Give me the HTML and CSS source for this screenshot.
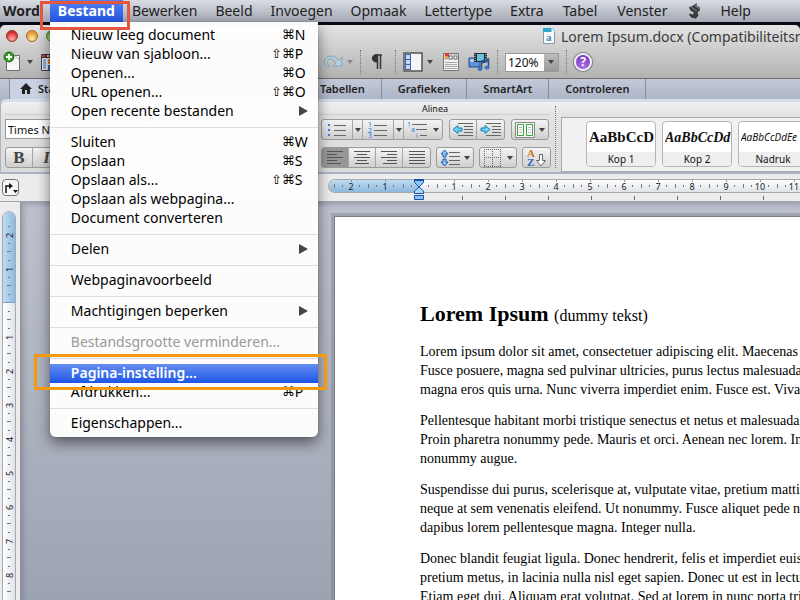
FILE: index.html
```html
<!DOCTYPE html>
<html lang="nl">
	<head>
		<meta charset="utf-8">
		<title>Lorem Ipsum.docx</title>
		<link rel="stylesheet" href="styles.css">
	</head>
	<body>

		<!-- menubalk -->
		<nav class="menubar">
			<button class="menu app">Word</button>
			<div class="menu-open">
				<button class="menu active">Bestand</button>
				<span class="mark mark-red"></span>

				<ul class="dropdown">
					<li><button class="item">Nieuw leeg document<kbd>⌘<b>N</b></kbd></button></li>
					<li><button class="item">Nieuw van sjabloon...<kbd>⇧⌘<b>P</b></kbd></button></li>
					<li><button class="item">Openen...<kbd>⌘<b>O</b></kbd></button></li>
					<li><button class="item">URL openen...<kbd>⇧⌘<b>O</b></kbd></button></li>
					<li><button class="item">Open recente bestanden<i class="sub"></i></button></li>
					<li class="line"></li>
					<li><button class="item">Sluiten<kbd>⌘<b>W</b></kbd></button></li>
					<li><button class="item">Opslaan<kbd>⌘<b>S</b></kbd></button></li>
					<li><button class="item">Opslaan als...<kbd>⇧⌘<b>S</b></kbd></button></li>
					<li><button class="item">Opslaan als webpagina...</button></li>
					<li><button class="item">Document converteren</button></li>
					<li class="line"></li>
					<li><button class="item">Delen<i class="sub"></i></button></li>
					<li class="line"></li>
					<li><button class="item">Webpaginavoorbeeld</button></li>
					<li class="line"></li>
					<li><button class="item">Machtigingen beperken<i class="sub"></i></button></li>
					<li class="line"></li>
					<li><button class="item" disabled>Bestandsgrootte verminderen...</button></li>
					<li class="line"></li>
					<li class="selected">
						<button class="item">Pagina-instelling...</button>
						<span class="mark mark-orange"></span>
					</li>
					<li><button class="item">Afdrukken...<kbd>⌘<b>P</b></kbd></button></li>
					<li class="line"></li>
					<li><button class="item">Eigenschappen...</button></li>
				</ul>
			</div>
			<button class="menu">Bewerken</button>
			<button class="menu">Beeld</button>
			<button class="menu">Invoegen</button>
			<button class="menu">Opmaak</button>
			<button class="menu">Lettertype</button>
			<button class="menu">Extra</button>
			<button class="menu wider">Tabel</button>
			<button class="menu wider">Venster</button>
			<button class="menu wider" aria-label="Script">
				<svg width="14" height="16" viewBox="0 0 14 16"><path d="M10 0L4.500 3.500 2 4l1 3 2 1.500 2 1-1 2-3-1-1 1.500L5 15l4 .5 2.500-3-1-3L13 7l-.5-3-3-1z" fill="#3a3a3c"/><path d="M4 4l6 4M7.500 2.500l4.500 3" stroke="#85888f"/></svg>
			</button>
			<button class="menu">Help</button>
		</nav>

		<div class="window">

			<div class="titlebar">
				<div class="lights">
					<button class="light red" aria-label="Sluit"></button>
					<button class="light yellow" aria-label="Minimaliseer"></button>
					<button class="light green" aria-label="Zoom"></button>
				</div>
				<div class="doc-title">
					<svg width="14" height="16" viewBox="0 0 14 16"><path d="M1.500.5h8l3 3v12h-11z" fill="#f6fafd" stroke="#8a98a6"/><path d="M1 0h9l3 3v1H1z" fill="#2fa5c9"/><path d="M9.500 0v4H13z" fill="#fff"/><text x="4" y="13" font-family="Liberation Serif, serif" font-size="11" font-weight="bold" fill="#3b8fbd">a</text></svg>
					<span>Lorem Ipsum.docx (Compatibiliteitsmodus)</span>
				</div>
			</div>

			<!-- werkbalk -->
			<div class="toolbar">
				<div class="tools-left">
					<button class="tool" aria-label="Nieuw">
						<svg width="20" height="22" viewBox="0 0 20 22"><path d="M3.500 4.500h13v15h-13z" fill="#f8f8f8" stroke="#6d6d6d"/><path d="M12 4.500l4.500 4.500" stroke="#aaa"/><circle cx="6" cy="6" r="5" fill="#3a9a2c" stroke="#1f6d18"/><path d="M6 3v6M3 6h6" stroke="#fff" stroke-width="2"/></svg>
					</button>
					<i class="down"></i>
					<button class="tool gallery" aria-label="Sjablonen">
						<svg width="20" height="20" viewBox="0 0 20 20"><path d="M.5 2.500h19v16H.5z" fill="#dfe7f2" stroke="#444"/><path d="M1 2h19v4H1z" fill="#333"/><path d="M1 3h3v2H1z" fill="#e0402c"/><path d="M6 3h2v2H6zM10 3h2v2h-2z" fill="#ccc"/><path d="M2 8h3M2 10h3M2 12h3M2 14h3M2 16h3" stroke="#4478b8"/><path d="M7 7h6v5H7z" fill="#e2762b"/><path d="M7 13h6v5H7z" fill="#3b62a8"/><path d="M14 7h5v11h-5z" fill="#543e38"/></svg>
					</button>
				</div>
				<button class="tool redo" aria-label="Opnieuw">
					<svg width="20" height="18" viewBox="0 0 20 18"><path d="M5 14.500C-1 11 .5 3 8 3c4 0 6 2 7.500 4.500L19 4v9h-9l3-3c-1.500-3-3-4-5-4-4 0-5 4-2 6.500z" fill="#b5cedb" stroke="#86a4b4"/></svg>
				</button>
				<i class="down pale"></i>
				<i class="dots"></i>
				<button class="tool pilcrow" aria-label="Alineatekens">
					<svg width="12" height="16" viewBox="0 0 12 16"><path d="M5 1h6M6.500 1v14M9.500 1v14" stroke="#333" stroke-width="1.500"/><path d="M6.500 0C-1 0-1 8.500 6.500 8.500z" fill="#333"/></svg>
				</button>
				<i class="dots"></i>
				<button class="tool" aria-label="Zijbalk">
					<svg width="20" height="20" viewBox="0 0 20 20"><path d="M1 1h18v18H1z" fill="#f4f5f8" stroke="#555" stroke-width="1.500"/><path d="M2 2h6v16H2z" fill="#3f62a8"/><path d="M3 3h4v4H3zM3 8h4v4H3zM3 13h4v4H3z" fill="#c5d6f0"/></svg>
				</button>
				<i class="down"></i>
				<button class="tool toolbox" aria-label="Werkset">
					<svg width="18" height="20" viewBox="0 0 18 20"><path d="M1.500 1.500h15v17h-15z" fill="#f1f1f1" stroke="#777"/><path d="M2 2h14v6H2z" fill="#d5d5d5"/><path d="M3 1h4v4H3z" fill="#d63e25"/><path d="M3 4h3v3H3z" fill="#e8a13a"/><path d="M7 4h3v3H7zM12 4h3v3h-3z" fill="#fff" stroke="#555" stroke-width=".8"/><path d="M3 10.500h12M3 12.500h12M3 14.500h12M3 16.500h12" stroke="#aaa"/></svg>
				</button>
				<button class="tool" aria-label="Media">
					<svg width="22" height="20" viewBox="0 0 22 20"><path d="M1 6h11v9H1z" fill="#5c93dd" stroke="#24468c"/><path d="M2 7h9v3H2z" fill="#a5cbf5"/><path d="M6 1h13v9H6z" fill="#262b33"/><path d="M9 2h7v7H9z" fill="#6ac3da"/><path d="M7 2v7M18 2v7" stroke="#ddd" stroke-dasharray="1 1"/><path d="M13.500 17V9l7-2v8M13.500 11l7-2" fill="none" stroke="#28528e" stroke-width="1.500"/><ellipse cx="12" cy="17" rx="2.500" ry="2" fill="#3c73bc"/><ellipse cx="19" cy="15.500" rx="2.500" ry="2" fill="#3c73bc"/></svg>
				</button>
				<i class="dots"></i>
				<div class="zoom">
					<input type="text" value="120%" aria-label="Zoom">
					<button aria-label="Zoomniveaus"><i class="down"></i></button>
				</div>
				<i class="dots"></i>
				<button class="help" aria-label="Help">?</button>
			</div>

			<!-- tabbladen -->
			<div class="tabs">
				<button class="tab start">
					<svg width="12" height="11" viewBox="0 0 12 11"><path d="M6 0l6 6h-2v5H7V7H5v4H2V6H0z" fill="#222"/></svg>
					Start
				</button>
				<button class="tab layout" aria-label="Indeling"></button>
				<button class="tab elements" aria-label="Documentelementen"></button>
				<button class="tab first">Tabellen</button>
				<button class="tab">Grafieken</button>
				<button class="tab">SmartArt</button>
				<button class="tab">Controleren</button>
			</div>

			<!-- lint -->
			<div class="ribbon">
				<div class="group font-group">
					<div class="group-name"></div>
					<div class="row"><input class="font-name" type="text" value="Times New Roman" aria-label="Lettertype"></div>
					<div class="row">
						<div class="buttons">
							<button class="bold">B</button>
							<button class="italic">I</button>
						</div>
					</div>
				</div>

				<div class="group para-group">
					<div class="group-name">Alinea</div>
					<div class="row">
						<div class="buttons">
							<button class="list" aria-label="Opsomming"><svg width="20" height="16" viewBox="0 0 20 16"><path d="M1 2h2v2H1zM1 7h2v2H1zM1 12h2v2H1z" fill="#2a83e0"/><path d="M7 3.500h12M7 8.500h12M7 13.500h12" stroke="#666"/></svg></button>
							<button class="arrow" aria-label="Opsommingstekens"><i class="down"></i></button>
							<button class="list" aria-label="Nummering"><svg width="20" height="16" viewBox="0 0 20 16"><g font-family="Noto Sans, sans-serif" font-size="7" fill="#2a83e0"><text x="0" y="5">1</text><text x="0" y="11">2</text><text x="0" y="16">3</text></g><path d="M6 3.500h13M6 8.500h13M6 13.500h13" stroke="#666"/></svg></button>
							<button class="arrow" aria-label="Nummerstijlen"><i class="down"></i></button>
							<button class="split levels" aria-label="Lijst met meerdere niveaus"><svg width="22" height="16" viewBox="0 0 22 16"><g font-family="Noto Sans, sans-serif" font-size="7" fill="#2a83e0"><text x="0" y="5">1</text><text x="4" y="10">a</text><text x="9" y="16">i</text></g><path d="M5 2.500h15M9 7.500h11M13 13.500h7" stroke="#666"/></svg><i class="down"></i></button>
						</div>
						<div class="buttons">
							<button aria-label="Inspringing verkleinen"><svg width="22" height="16" viewBox="0 0 22 16"><path d="M6 1.500h15M12 4.500h9M12 7.500h9M12 10.500h9M6 13.500h15" stroke="#666"/><path d="M1 7.500l5-4v2.500h4v3H6v2.500z" fill="#6ed5f5" stroke="#1a7fae"/></svg></button>
							<button aria-label="Inspringing vergroten"><svg width="22" height="16" viewBox="0 0 22 16"><path d="M6 1.500h15M12 4.500h9M12 7.500h9M12 10.500h9M6 13.500h15" stroke="#666"/><path d="M10 7.500l-5-4v2.500H1v3h4v2.500z" fill="#6ed5f5" stroke="#1a7fae"/></svg></button>
						</div>
						<div class="buttons">
							<button class="split" aria-label="Kolommen"><svg width="20" height="16" viewBox="0 0 20 16"><path d="M.5.5h19v15H.5z" fill="#f4f4f4" stroke="#888"/><path d="M2.500 2.500h6v11h-6zM11.500 2.500h6v11h-6z" fill="#fff" stroke="#3ba53b"/><path d="M4 5.500h3M4 8h3M4 10.500h3M13 5.500h3M13 8h3M13 10.500h3" stroke="#bbb"/></svg><i class="down"></i></button>
						</div>
					</div>
					<div class="row tight">
						<div class="buttons">
							<button class="on" aria-label="Links uitlijnen"><svg width="18" height="16" viewBox="0 0 18 16"><path d="M1 1.500h16M1 4.500h10M1 7.500h16M1 10.500h10M1 13.500h14" stroke="#555"/></svg></button>
							<button aria-label="Centreren"><svg width="18" height="16" viewBox="0 0 18 16"><path d="M1 1.500h16M4 4.500h10M1 7.500h16M4 10.500h10M2 13.500h14" stroke="#555"/></svg></button>
							<button aria-label="Rechts uitlijnen"><svg width="18" height="16" viewBox="0 0 18 16"><path d="M1 1.500h16M7 4.500h10M1 7.500h16M7 10.500h10M3 13.500h14" stroke="#555"/></svg></button>
							<button aria-label="Uitvullen"><svg width="18" height="16" viewBox="0 0 18 16"><path d="M1 1.500h16M1 4.500h16M1 7.500h16M1 10.500h16M1 13.500h16" stroke="#555"/></svg></button>
						</div>
						<div class="buttons">
							<button class="split" aria-label="Regelafstand"><svg width="20" height="18" viewBox="0 0 20 18"><path d="M4.500 1l3.500 4H6v3H3V5H1zM4.500 17L1 13h2v-3h3v3h2z" fill="#8fc4f7" stroke="#1f5fae"/><path d="M9 3.500h11M9 7.500h11M9 11.500h11M9 15.500h11" stroke="#666"/></svg><i class="down"></i></button>
						</div>
						<div class="buttons">
							<button class="split" aria-label="Randen"><svg width="20" height="18" viewBox="0 0 20 18"><path d="M1.500 0v18M9.500 0v18M17.500 0v18M1 .5h18M1 8.500h18M1 17.500h18" stroke="#666" stroke-dasharray="1 1"/></svg><i class="down"></i></button>
						</div>
						<div class="buttons">
							<button aria-label="Sorteren"><svg width="22" height="20" viewBox="0 0 22 20"><g font-family="Liberation Serif, serif" font-weight="bold" font-size="11"><text x="1" y="9" fill="#c77a0c">A</text><text x="1" y="18" fill="#2b66b8">Z</text></g><path d="M13.500 6.500h3v6h3L15 18l-4.500-5.500h3z" fill="#fff" stroke="#666"/></svg></button>
						</div>
					</div>
				</div>

				<i class="dots"></i>

				<div class="styles">
					<button class="style"><span class="sample kop1">AaBbCcD</span><span class="style-name">Kop 1</span></button>
					<button class="style"><span class="sample kop2">AaBbCcDd</span><span class="style-name">Kop 2</span></button>
					<button class="style"><span class="sample nadruk">AaBbCcDdEe</span><span class="style-name">Nadruk</span></button>
				</div>
			</div>

			<!-- horizontale liniaal -->
			<div class="ruler-row">
				<button class="tab-stop" aria-label="Tabstop">
					<svg width="14" height="12" viewBox="0 0 14 12"><path d="M2 11V4h4" fill="none" stroke="#111" stroke-width="1.500"/><path d="M5 1l4 3-4 3zM9 8h5l-2.500 3z" fill="#111"/></svg>
				</button>
				<div class="hruler">
					<div class="scale">
						<div class="margin"><span>2</span><span>1</span></div>
						<span class="zero"></span><span>1</span><span>2</span><span>3</span><span>4</span><span>5</span><span>6</span><span>7</span><span>8</span><span>9</span><span>10</span><span>11</span>
						<svg class="indent" width="12" height="24" viewBox="0 0 12 24"><path d="M1.500 1.500h9v3L6 9 1.500 4.500z" fill="#8cc4f5" stroke="#1c53a5"/><path d="M1 1h10v2H1z" fill="#1c4fa8"/><path d="M6 9l4.500 4v2.500h-9V13z" fill="#a6d8fb" stroke="#1c53a5"/><path d="M1.500 17.500h9v4h-9z" fill="#8cc4f5" stroke="#1c53a5"/></svg>
					</div>
					<div class="stops"></div>
				</div>
			</div>

			<div class="work">
				<div class="vruler">
					<div class="vscale">
						<div class="vmargin"><span>2</span><span>1</span></div>
						<span class="zero"></span><span>1</span><span>2</span><span>3</span><span>4</span><span>5</span><span>6</span><span>7</span><span>8</span><span></span>
					</div>
				</div>

				<div class="canvas">
					<div class="page">
						<h1>Lorem Ipsum <small>(dummy tekst)</small></h1>
						<p>Lorem ipsum dolor sit amet, consectetuer adipiscing elit. Maecenas<br>
						Fusce posuere, magna sed pulvinar ultricies, purus lectus malesuada<br>
						magna eros quis urna. Nunc viverra imperdiet enim. Fusce est. Vivamus</p>
						<p>Pellentesque habitant morbi tristique senectus et netus et malesuada<br>
						Proin pharetra nonummy pede. Mauris et orci. Aenean nec lorem. In<br>
						nonummy augue.</p>
						<p>Suspendisse dui purus, scelerisque at, vulputate vitae, pretium mattis<br>
						neque at sem venenatis eleifend. Ut nonummy. Fusce aliquet pede non<br>
						dapibus lorem pellentesque magna. Integer nulla.</p>
						<p>Donec blandit feugiat ligula. Donec hendrerit, felis et imperdiet euismod<br>
						pretium metus, in lacinia nulla nisl eget sapien. Donec ut est in lectus<br>
						Etiam eget dui. Aliquam erat volutpat. Sed at lorem in nunc porta tristique</p>
					</div>
				</div>
			</div>
		</div>

	</body>
</html>
```

FILE: styles.css
```css
*{
	box-sizing: border-box;
}

body{
	margin: 0;
	height: 100vh;
	overflow: hidden;
	display: flex;
	flex-direction: column;
	background: #070b16;
	font-family: "Noto Sans", sans-serif;
	font-size: 14px;
	color: #111;
}

button,input{
	margin: 0;
	padding: 0;
	border: 0;
	background: none;
	font-family: inherit;
	font-size: inherit;
	font-weight: inherit;
	color: inherit;
}

svg{
	display: block;
	flex: none;
}

/* menubalk */
.menubar{
	display: flex;
	flex: none;
	height: 22px;
	margin-bottom: 3px;
	background: linear-gradient(#d9dce3, #a3a8b3);
	white-space: nowrap;
}

.menu{
	height: 22px;
	padding: 0 9px;
	line-height: 22px;
	display: flex;
	align-items: center;
	flex: none;
	color: #222;
}

.app{
	padding: 0 10px 0 3px;
	font-weight: bold;
}

.wider{
	padding: 0 10px;
}

.menu-open{
	position: relative;
	z-index: 10;
}

.active{
	padding: 0 8px;
	background: linear-gradient(#5480ee, #2357e6);
	color: #fff;
	font-weight: bold;
}

.mark{
	position: absolute;
	z-index: 12;
	pointer-events: none;
}

.mark-red{
	top: 1px;
	left: -10px;
	right: -7px;
	height: 29px;
	border: 3px solid #e5563f;
}

.mark-orange{
	top: -10px;
	left: -16px;
	right: -9px;
	height: 36px;
	border: 3px solid #f59a0c;
}

/* uitklapmenu */
.dropdown{
	position: absolute;
	top: 22px;
	left: 0;
	width: 268px;
	margin: 0;
	padding: 4px 0;
	list-style: none;
	background: rgba(253,253,253,.98);
	border-radius: 0 0 6px 6px;
	box-shadow: 0 6px 14px rgba(0,0,0,.5), 0 0 1px rgba(0,0,0,.5);
}

.item{
	display: flex;
	align-items: center;
	justify-content: space-between;
	width: 100%;
	height: 19px;
	padding: 0 10px 2px 21px;
	line-height: 17px;
	color: #000;
}

.item:disabled{
	color: #999;
}

.item kbd{
	display: flex;
	font-family: "DejaVu Sans", sans-serif;
	font-size: 13px;
}

.item b{
	width: 13px;
	font-family: "Noto Sans", sans-serif;
	font-size: 14px;
	font-weight: normal;
	text-align: left;
}

.sub{
	border-left: 9px solid #444;
	border-top: 5px solid transparent;
	border-bottom: 5px solid transparent;
}

.line{
	height: 12px;
	padding-top: 6px;
}

.line::before{
	content: "";
	display: block;
	height: 1px;
	background: #ddd;
}

.selected{
	position: relative;
	background: linear-gradient(#668df0, #1c56e8);
}

.selected .item{
	color: #fff;
	font-weight: 600;
}

/* venster */
.window{
	flex: 1;
	min-height: 0;
	display: flex;
	flex-direction: column;
	border-radius: 5px 5px 0 0;
	overflow: hidden;
	background: linear-gradient(#e4e4e4, #b2b2b2 53px);
}

.titlebar{
	display: flex;
	flex: none;
	align-items: center;
	height: 22px;
	white-space: nowrap;
}

.lights{
	display: flex;
	gap: 8px;
	width: 542px;
	padding-left: 6px;
	flex: none;
}

.light{
	width: 12px;
	height: 12px;
	border-radius: 50%;
	border: 1px solid #8a3030;
}

.red{
	background: radial-gradient(circle at 50% 80%, #ffb0a8, #d92d2c 70%);
}

.yellow{
	border-color: #9c6a26;
	background: radial-gradient(circle at 50% 80%, #ffe9a8, #e29a35 70%);
}

.green{
	border-color: #4c7d30;
	background: radial-gradient(circle at 50% 80%, #d5f5a8, #67a93d 70%);
}

.doc-title{
	display: flex;
	align-items: center;
	gap: 5px;
	color: #3a3a3a;
}

.toolbar{
	display: flex;
	flex: none;
	align-items: center;
	height: 31px;
	padding-bottom: 1px;
}

.tools-left{
	display: flex;
	align-items: center;
	width: 323px;
	padding-left: 3px;
	gap: 4px;
	flex: none;
}

.tool{
	flex: none;
}

.gallery{
	margin-left: 4px;
}

.down{
	flex: none;
	border-top: 4px solid #444;
	border-left: 3px solid transparent;
	border-right: 3px solid transparent;
}

.toolbar > .down{
	margin-left: 4px;
}

.toolbar > .pale{
	border-top-color: #888;
}

.dots{
	flex: none;
	height: 24px;
	border-left: 1px dotted #777;
}

.toolbar .dots{
	margin: 0 7px;
}

.toolbar .pilcrow{
	margin: 0 5px 0 3px;
}

.toolbox{
	margin: 0 8px 0 9px;
}

.zoom{
	display: flex;
	height: 19px;
	border: 1px solid #999;
	background: #fff;
	font-size: 12px;
}

.zoom input{
	width: 38px;
	padding-left: 2px;
}

.zoom button{
	display: flex;
	align-items: center;
	justify-content: center;
	width: 14px;
	background: linear-gradient(#bbb, #999);
}

.help{
	width: 18px;
	height: 18px;
	border: 2px solid #f3effa;
	border-radius: 50%;
	background: radial-gradient(circle at 50% 80%, #b070e8, #6a2fb4);
	box-shadow: 0 0 1px 1px #777;
	color: #fff;
	font-size: 12px;
	line-height: 14px;
	font-weight: bold;
}

/* tabbladen */
.tabs{
	display: flex;
	flex: none;
	height: 21px;
	padding-left: 9px;
	border-top: 1px solid #6c6c6c;
	background: linear-gradient(#c3c9d7, #adb5c7);
	font-size: 11px;
	font-weight: 600;
	color: #222;
}

.tab{
	flex: none;
	padding: 0 16px 2px;
	border-right: 1px solid #868d9c;
}

.start{
	display: flex;
	align-items: center;
	gap: 6px;
	width: 73px;
	padding-left: 10px;
	border-left: 1px solid #868d9c;
	background: #c9d2e3;
}

.layout{
	width: 76px;
}

.elements{
	width: 151px;
}

.first{
	padding-left: 11px;
}

/* lint */
.ribbon{
	display: flex;
	flex: none;
	height: 75px;
	border-top: 3px solid #d5dcea;
	border-bottom: 2px solid #a8b3c5;
	border-left: 1px solid #a8b3c5;
	border-radius: 6px 0 0 0;
	background: linear-gradient(#f0f0f0, #e3e3e3 13px, #dadada);
}

.group{
	flex: none;
}

.group-name{
	height: 13px;
	margin-bottom: 4px;
	border-bottom: 1px solid #d0d0d0;
	font-size: 9px;
	line-height: 13px;
	text-align: center;
}

.font-group{
	width: 320px;
	padding-left: 4px;
}

.para-group{
	width: 228px;
}

.row{
	display: flex;
	gap: 6px;
	height: 21px;
	margin-bottom: 7px;
}

.tight{
	gap: 5px;
}

.font-name{
	width: 140px;
	height: 20px;
	padding-left: 2px;
	border: 1px solid #999;
	background: #fff;
	font-size: 11px;
}

.buttons{
	display: flex;
	flex: none;
	border: 1px solid #9b9b9b;
	border-radius: 3px;
	background: linear-gradient(#f4f4f4, #cfcfcf);
	overflow: hidden;
}

.buttons button{
	display: flex;
	align-items: center;
	justify-content: center;
	width: 27px;
	border-right: 1px solid #a5a5a5;
}

.buttons button:last-child{
	border-right: 0;
}

.row .buttons .list{
	width: 31px;
}

.row .buttons .arrow{
	width: 10px;
}

.row .buttons .split{
	width: 36px;
	gap: 4px;
}

.row .buttons .levels{
	width: 38px;
}

.buttons .on{
	background: #979797;
}

.buttons .bold,.buttons .italic{
	font-family: "Liberation Serif", serif;
	font-size: 17px;
	font-weight: bold;
	color: #444;
}

.buttons .italic{
	font-style: italic;
}

.ribbon > .dots{
	height: 62px;
	margin: 4px 5px 0 6px;
}

.styles{
	display: flex;
	flex: 1;
	gap: 6px;
	height: 55px;
	margin-top: 15px;
	padding: 3px 0 4px 24px;
	border: 1px solid #aaa;
	border-right: 0;
	background: #f1f1f1;
	overflow: hidden;
}

.style{
	display: flex;
	flex-direction: column;
	flex: none;
	width: 70px;
	border: 1px solid #b5b5b5;
	border-radius: 4px;
	background: #fff;
	overflow: hidden;
}

.sample{
	width: 66px;
	height: 31px;
	margin-left: 2px;
	line-height: 31px;
	text-align: left;
	overflow: hidden;
}

.kop1,.kop2{
	font-family: "Liberation Serif", serif;
	font-size: 15px;
	font-weight: bold;
}

.kop2{
	font-size: 14px;
	font-style: italic;
}

.nadruk{
	font-size: 10px;
	font-style: italic;
}

.style-name{
	width: 100%;
	flex: 1;
	background: #eee;
	font-size: 10px;
	line-height: 14px;
	text-align: center;
}

/* liniaal */
.ruler-row{
	display: flex;
	flex: none;
	height: 28px;
	border-bottom: 1px solid #a2a6af;
	background: #ececec;
}

.tab-stop{
	display: flex;
	align-items: center;
	justify-content: center;
	width: 17px;
	height: 17px;
	margin: 5px 0 0 2px;
	border: 1px solid #777;
	border-radius: 4px;
	background: #f6f6f6;
}

.hruler{
	flex: 1;
	min-width: 0;
	padding: 5px 0 0 309px;
}

.scale{
	position: relative;
	display: flex;
	height: 14px;
	border: 1px solid #a4a9b0;
	border-right: 0;
	border-radius: 7px 0 0 7px;
	background: linear-gradient(#fff, #dfe3e8);
	font-size: 9px;
	line-height: 13px;
	color: #222;
}

.margin{
	display: flex;
	width: 90px;
	padding-left: 5px;
	margin-right: -16px;
	flex: none;
	border-radius: 6px 0 0 6px;
	background: linear-gradient(#bcdcf3, #8fb9dd);
}

.scale span{
	flex: none;
	width: 34px;
	text-align: center;
	background:
		linear-gradient(#777, #777) 0 4px / 1px 4px no-repeat,
		linear-gradient(#777, #777) 8px 5px / 1px 2px no-repeat,
		linear-gradient(#777, #777) 25px 5px / 1px 2px no-repeat,
		linear-gradient(#999, #999) 17px 0 / 1px 2px no-repeat;
}

.indent{
	position: absolute;
	left: 84px;
	top: -2px;
}

.stops{
	height: 4px;
	margin: 3px 0 0 92px;
	background: repeating-linear-gradient(90deg, transparent 0 42px, #667 42px 43px);
}

.work{
	display: flex;
	flex: 1;
	min-height: 0;
}

.vruler{
	flex: none;
	width: 21px;
	padding: 9px 4px 0 2px;
	background: #ececec;
	border-right: 1px solid #8d929c;
	overflow: hidden;
}

.vscale{
	border: 1px solid #a4a9b0;
	border-radius: 7px 7px 0 0;
	background: linear-gradient(90deg, #fff, #dfe3e8);
	font-size: 9px;
	line-height: 13px;
	color: #222;
}

.vmargin{
	height: 91px;
	padding-top: 6px;
	margin-bottom: -17px;
	border-radius: 6px 6px 0 0;
	border-bottom: 1px solid #7ba3c6;
	background: linear-gradient(90deg, #bcdcf3, #8fb9dd);
}

.vscale span{
	display: block;
	width: 13px;
	height: 34px;
	text-align: center;
	writing-mode: vertical-rl;
	transform: rotate(180deg);
	background:
		linear-gradient(#777, #777) 5px 0 / 4px 1px no-repeat,
		linear-gradient(#777, #777) 6px 8px / 2px 1px no-repeat,
		linear-gradient(#777, #777) 6px 25px / 2px 1px no-repeat;
}

/* document */
.canvas{
	flex: 1;
	min-width: 0;
	padding: 14px 0 0 313px;
	background: linear-gradient(#bdc1ce, #9da4b1);
	box-shadow: inset 3px 3px 4px rgba(80,85,100,.3);
	overflow: hidden;
}

.page{
	height: 100%;
	padding: 84px 0 0 85px;
	border-left: 1px solid #777c86;
	border-top: 1px solid #777c86;
	box-shadow: 0 0 0 3px rgba(110,115,130,.35);
	background: #fff;
	font-family: "Liberation Serif", serif;
	font-size: 14px;
	line-height: 19px;
	color: #000;
	white-space: nowrap;
}

.page h1{
	margin: 0 0 13px;
	font-size: 22px;
	line-height: 26px;
}

.page small{
	font-size: 16px;
	font-weight: normal;
}

.page p{
	margin: 0 0 12px;
}
```
